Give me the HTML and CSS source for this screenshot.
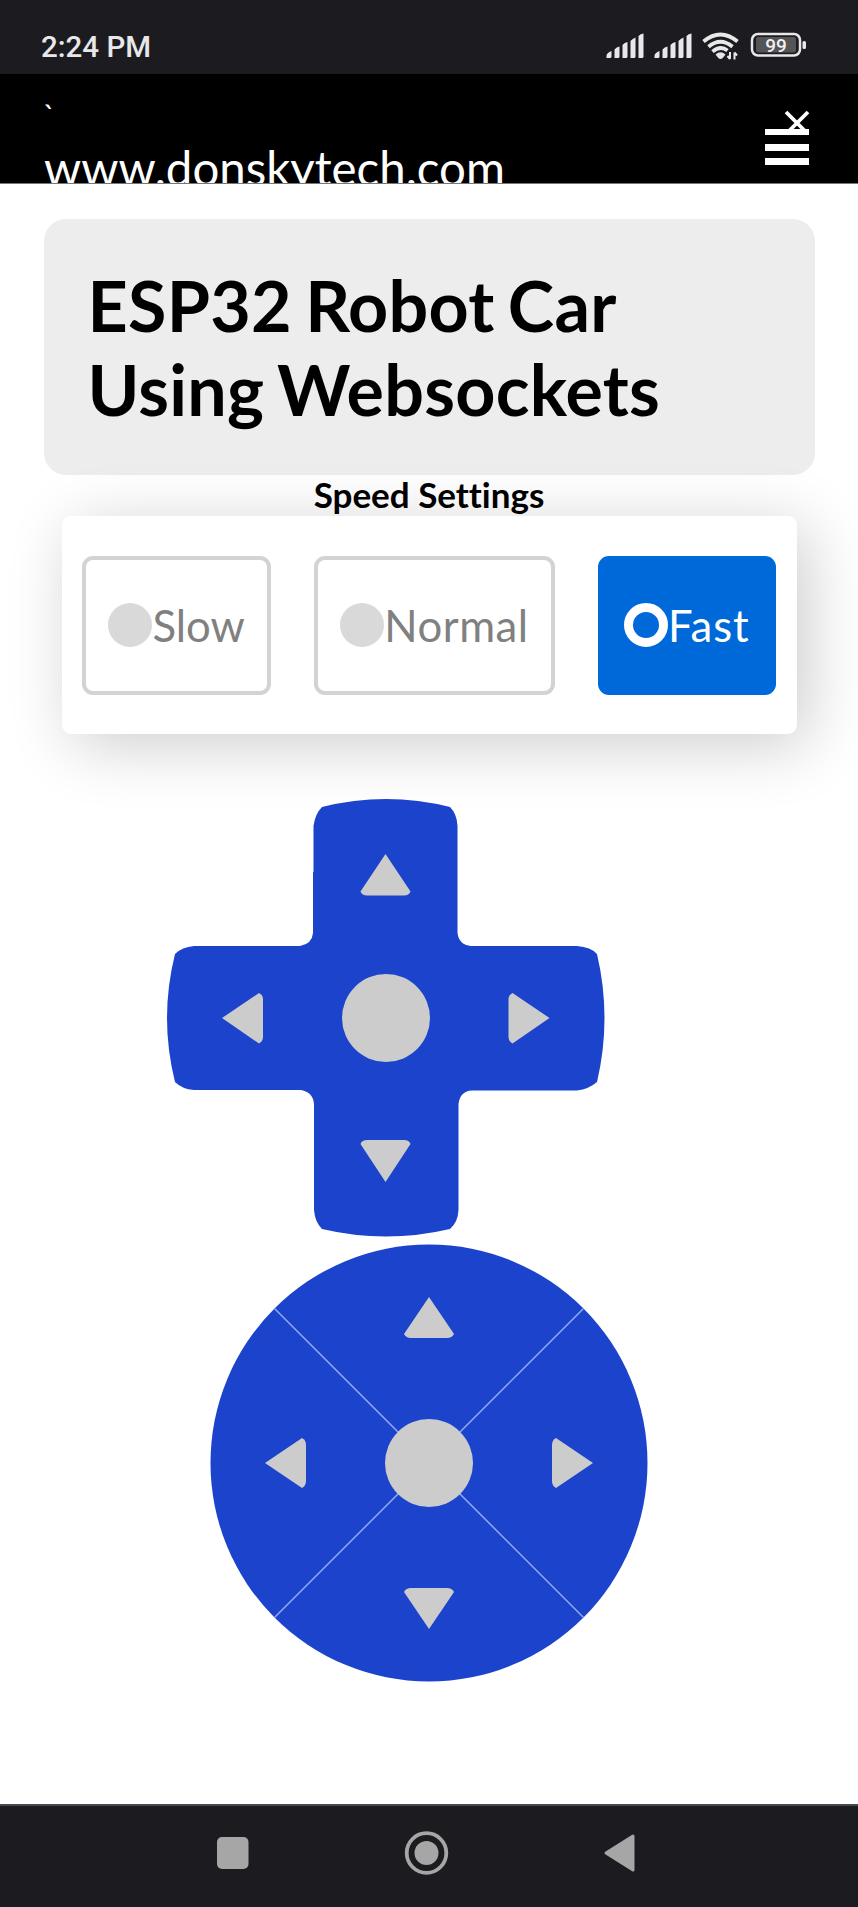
FILE: index.html
```html
<!DOCTYPE html>
<html lang="en">
<head>
<meta charset="utf-8">
<title>ESP32 Robot Car</title>
<link rel="stylesheet" href="styles.css">
</head>
<body>
<div class="statusbar">
  <span class="clock">2:24 PM</span>
  <svg class="status-icons" width="202" height="30" viewBox="0 0 202 30">
    <g fill="#e8e8ea">
      <g id="signal">
        <path d="M0.5 26v-2q0-3 5-5v5.500q0 1.500-1.500 1.500zM8.500 26V17.500q2-2.500 5-3V24.500q0 1.500-1.500 1.500zM16.500 26V13q2-2.500 5-3V24.500q0 1.500-1.500 1.500zM24.500 26V9q2-2.500 5-3.500V24.500q0 1.500-1.500 1.500zM32.500 26V4q2-2.500 5-2.500V24.500q0 1.500-1.500 1.500z"/>
      </g>
      <use href="#signal" x="48"/>
      <path d="M109.500 22.500q5-4.500 10 0l-3 3.800q-2 1.500-4 0z"/>
    </g>
    <g fill="none" stroke="#e8e8ea" stroke-width="3.800">
      <path d="M97.500 9.500q17-14 34 0"/>
      <path d="M102.500 14.800q12-10 24 0"/>
      <path d="M106.500 19.600q8-6.500 15 -1"/>
    </g>
    <path d="M124 20v7M121.500 24l2.500 3M128.500 27.500v-7M131 23.500l-2.500-3" fill="none" stroke="#e8e8ea" stroke-width="2"/>
    <rect x="146" y="2" width="48" height="21.500" rx="6" fill="none" stroke="#e8e8ea" stroke-width="2.500"/>
    <rect x="150" y="5" width="40" height="15.500" rx="2" fill="#555557"/>
    <rect x="196.500" y="9" width="3.500" height="8" rx="1.500" fill="#e8e8ea"/>
    <text class="battery-level" x="170" y="19.700" text-anchor="middle">99</text>
  </svg>
</div>
<nav class="navbar">
  <div class="brand"><div class="tick">`</div><div>www.donskytech.com</div></div>
  <svg class="menu" width="46" height="58" viewBox="0 0 46 58">
    <path d="M22 4l22 22M44 4L22 26" stroke="#fff" stroke-width="3.800"/>
    <path d="M1 21h44v6H1zM1 36h44v7H1zM1 50h44v7H1z" fill="#fff"/>
  </svg>
</nav>
<main class="content">
  <header class="title-card"><h1>ESP32 Robot Car Using Websockets</h1></header>
  <h2 class="speed-title">Speed Settings</h2>
  <section class="speed-panel">
    <div class="option"><i class="dot"></i><span>Slow</span></div>
    <div class="option normal"><i class="dot"></i><span>Normal</span></div>
    <div class="option selected"><i class="dot"></i><span>Fast</span></div>
  </section>
  <section class="pads">
    <svg class="pad cross" width="438" height="438" viewBox="0 0 438 438">
      <path fill="#1b43cb" d="M155 8Q219-8 283 8Q290 15 290.500 27V134Q292 146 304 147H410Q424 148 430 155Q445 219 430 283Q422 290 410 291.500H305Q293 292 291.500 305V411Q291 423 283 430Q219 445 155 430Q148 423 147 411V305Q146 293 134 291H27Q15 290 8 283Q-8 219 8 155Q15 148 27 147H133Q145 145 146 134V73H146.500V27Q148 15 155 8Z"/>
      <g fill="#ccc">
        <circle cx="219" cy="219" r="44"/>
        <path d="M218.500 55L243.500 92.500Q242 96.500 237 96.500H200Q195 96.500 193.500 92.500Z"/>
        <path d="M218.500 383L243.500 345Q242 341 237 341H200Q195 341 193.500 345Z"/>
        <path d="M55 219L92 194Q96 196 96 200V238Q96 242 92 244.500Z"/>
        <path d="M382.500 219L345.500 194Q341.500 196 341.500 200V238Q341.500 242 345.500 244.500Z"/>
      </g>
    </svg>
    <svg class="pad" width="438" height="438" viewBox="0 0 438 438">
      <circle cx="219" cy="219" r="218.500" fill="#1b43cb"/>
      <path d="M64.500 64.500L373.500 373.500M373.500 64.500L64.500 373.500" stroke="#91a9f2" stroke-width="1.500"/>
      <g fill="#ccc">
        <circle cx="219" cy="219" r="44"/>
        <path d="M219 53L244 90Q242 94 237 94H201Q196 94 194 90Z"/>
        <path d="M219 385L244 348Q242 344 237 344H201Q196 344 194 348Z"/>
        <path d="M55 219L92 194Q96 196 96 201V237Q96 242 92 244Z"/>
        <path d="M383 219L346 194Q342 196 342 201V237Q342 242 346 244Z"/>
      </g>
    </svg>
  </section>
</main>
<footer class="sysnav">
  <svg width="858" height="101" viewBox="0 0 858 101" fill="#a6a6a6">
    <rect x="217" y="31" width="31.500" height="32" rx="5"/>
    <circle cx="426.500" cy="47" r="19.800" fill="none" stroke="#a6a6a6" stroke-width="3.800"/>
    <circle cx="426.500" cy="47" r="12"/>
    <path d="M606 47L633 30V64Z" stroke="#a6a6a6" stroke-width="3" stroke-linejoin="round"/>
  </svg>
</footer>
</body>
</html>
```
FILE: styles.css
```css
* { box-sizing: border-box; }
body { margin: 0; width: 858px; height: 1907px; display: flex; flex-direction: column; overflow: hidden; background: #fff; font-family: Lato, sans-serif; font-variant-ligatures: none; color: #000; }
.statusbar { height: 74px; flex: none; display: flex; justify-content: space-between; align-items: flex-start; padding: 32px 50px 0 41px; background: #1c1b20; }
.clock { font: 500 29.5px/30px Roboto, sans-serif; color: #e8e8ea; }
.battery-level { font: 500 19px Roboto, sans-serif; fill: #f0f0f0; }
.navbar { height: 110px; flex: none; display: flex; justify-content: space-between; align-items: flex-start; padding: 17px 48px 0 44px; background: #000; border-bottom: 1px solid #777; overflow: hidden; color: #fff; }
.brand { font-size: 47.4px; line-height: 58px; }
.tick { height: 48px; font-size: 31px; line-height: 48px; margin-left: -1px; }
.menu { margin-top: 17px; }
.content { flex: 1; display: flex; flex-direction: column; padding: 35px 43.5px 0; }
.title-card { height: 256px; flex: none; padding: 44px; border-radius: 22px; background: #ededed; }
h1 { margin: 0; font-size: 70px; line-height: 84px; font-weight: 700; letter-spacing: .25px; word-spacing: -4px; }
.speed-title { margin: 0; height: 41px; font-size: 35px; line-height: 38px; text-align: center; position: relative; z-index: 1; }
.speed-panel { width: 735px; height: 218px; flex: none; margin: 0 auto; display: flex; justify-content: center; align-items: center; gap: 43.5px; border-radius: 9px; background: #fff; box-shadow: 11px 11px 65px rgba(0,0,0,.2); }
.option { height: 139px; display: flex; align-items: center; padding: 0 22px; border: 4px solid #d3d3d3; border-radius: 11px; font-size: 43.7px; color: #808080; }
.dot { width: 44px; height: 44px; border-radius: 50%; background: #d9d9d9; }
.normal { letter-spacing: .5px; }
.selected { background: #0069d9; border-color: #0069d9; color: #fff; letter-spacing: .9px; }
.selected .dot { background: #0069d9; border: 9px solid #fff; }
.pads { display: flex; flex-direction: column; align-items: center; gap: 7px; padding-top: 65px; position: relative; }
.pad { display: block; overflow: visible; flex: none; }
.cross { margin-right: 87px; }
.sysnav { height: 103px; flex: none; border-top: 2px solid #48474c; background: #1c1b20; }
.sysnav svg { display: block; }
```
